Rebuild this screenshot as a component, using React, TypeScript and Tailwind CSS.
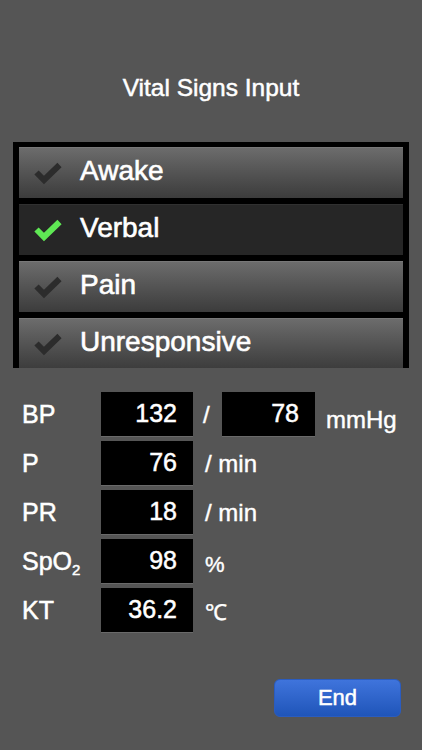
import React from 'react';

const levels = [
  { name: 'Awake', selected: false },
  { name: 'Verbal', selected: true },
  { name: 'Pain', selected: false },
  { name: 'Unresponsive', selected: false },
];

function Check({ on }: { on: boolean }) {
  return (
    <svg width="30" height="24" viewBox="0 0 30 24" className="shrink-0">
      <polyline
        points="3.5,11.5 11,19 26.5,4"
        fill="none"
        stroke={on ? '#5fe854' : '#2c2c2c'}
        strokeWidth="6"
        strokeLinejoin="miter"
        strokeLinecap="butt"
      />
    </svg>
  );
}

function LevelRow({ name, selected }: { name: string; selected: boolean }) {
  return (
    <div
      className={
        selected
          ? 'h-[51px] shrink-0 flex items-center pl-[14px] bg-[#262626] border-t border-[#303030]'
          : 'h-[51px] shrink-0 flex items-center pl-[14px] bg-gradient-to-b from-[#6c6c6c] to-[#3c3c3c] border-t border-[#787878]'
      }
    >
      <Check on={selected} />
      <span className="ml-[17px] mb-[5px] text-[28px] leading-none text-white [-webkit-text-stroke:0.6px_white]">
        {name}
      </span>
    </div>
  );
}

function ValueBox({ value, wide }: { value: string; wide?: boolean }) {
  return (
    <div
      className={`h-[45px] ${wide ? 'w-[93px]' : 'w-[92px]'} bg-black border-b border-[#6a6a6a] flex items-center justify-end pr-[16px] text-[25px] text-white [-webkit-text-stroke:0.5px_white]`}
    >
      {value}
    </div>
  );
}

function VitalRow({ label, children }: { label: React.ReactNode; children: React.ReactNode }) {
  return (
    <div className="h-[45px] flex items-center">
      <div className="w-[101px] pl-[22px] text-[25px] text-white [-webkit-text-stroke:0.5px_white]">{label}</div>
      {children}
    </div>
  );
}

const unit = 'text-white [-webkit-text-stroke:0.4px_white]';

export default function App() {
  return (
    <div
      className="w-[422px] h-[750px] bg-[#555555] flex flex-col overflow-hidden"
      style={{ fontFamily: '"Liberation Sans", Arial, sans-serif' }}
    >
      <div className="pt-[75px] h-[142px] text-center text-[24.5px] leading-[26px] text-white [-webkit-text-stroke:0.5px_white]">
        Vital Signs Input
      </div>

      <div className="mx-[13px] w-[396px] h-[226px] bg-black px-[6px] pt-[5px] flex flex-col gap-[6px] overflow-hidden">
        {levels.map((l) => (
          <LevelRow key={l.name} name={l.name} selected={l.selected} />
        ))}
      </div>

      <div className="mt-[24px] flex flex-col gap-[4px]">
        <VitalRow label="BP">
          <ValueBox value="132" />
          <span className={`w-[29px] pl-[10px] text-[24px] ${unit}`}>/</span>
          <ValueBox value="78" wide />
          <span className={`ml-[11px] text-[24px] mt-[10px] ${unit}`}>mmHg</span>
        </VitalRow>
        <VitalRow label="P">
          <ValueBox value="76" />
          <span className={`ml-[12px] text-[24px] ${unit}`}>/ min</span>
        </VitalRow>
        <VitalRow label="PR">
          <ValueBox value="18" />
          <span className={`ml-[12px] text-[24px] ${unit}`}>/ min</span>
        </VitalRow>
        <VitalRow
          label={
            <span>
              SpO<sub className="text-[15px] align-baseline relative top-[5px]">2</sub>
            </span>
          }
        >
          <ValueBox value="98" />
          <span className={`ml-[12px] text-[22px] mt-[6px] ${unit}`}>%</span>
        </VitalRow>
        <VitalRow label="KT">
          <ValueBox value="36.2" />
          <span className={`ml-[12px] text-[22px] mt-[4px] ${unit}`}>℃</span>
        </VitalRow>
      </div>

      <div className="mt-[46px] flex justify-end pr-[21px]">
        <button className="w-[127px] h-[38px] rounded-[6px] bg-gradient-to-b from-[#3f74dc] to-[#1f55b9] border border-[#2a5cc0] text-white text-[22px] leading-none [-webkit-text-stroke:0.5px_white]">
          End
        </button>
      </div>
    </div>
  );
}
